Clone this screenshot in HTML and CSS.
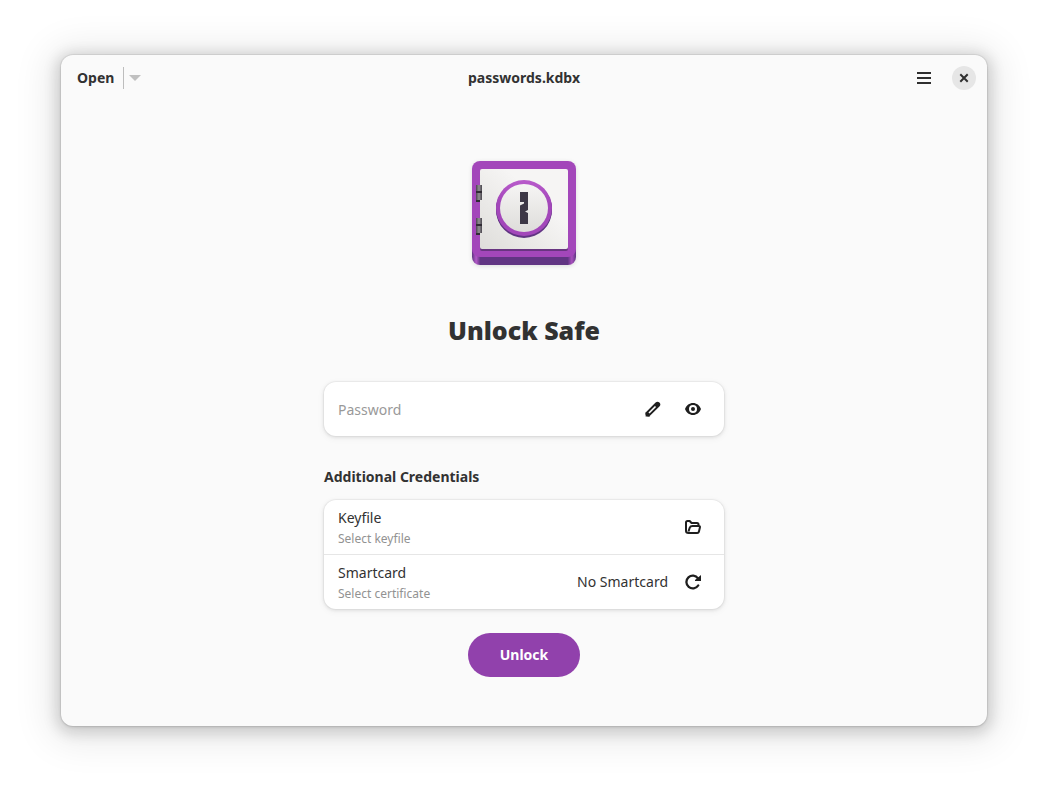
FILE: index.html
```html
<!DOCTYPE html>
<html lang="en">
<head>
<meta charset="utf-8">
<meta name="viewport" content="width=device-width, initial-scale=1">
<title>passwords.kdbx</title>
<link rel="stylesheet" href="styles.css">
</head>
<body>
<div class="window">
  <header class="headerbar">
    <div class="header-start">
      <button class="open-button" type="button">Open</button>
      <button class="recent-button" type="button" aria-label="Recent safes">
        <svg width="12" height="6" viewBox="0 0 12 6"><path d="M0 0h12L6 6z" fill="#c0c0c0"/></svg>
      </button>
    </div>
    <h1 class="window-title">passwords.kdbx</h1>
    <div class="header-end">
      <button class="menu-button" type="button" aria-label="Main menu">
        <svg width="16" height="16" viewBox="0 0 16 16"><path d="M1 2h14v2H1zM1 7h14v2H1zM1 12h14v2H1z" fill="#2f2f2f"/></svg>
      </button>
      <button class="close-button" type="button" aria-label="Close">
        <svg width="16" height="16" viewBox="0 0 16 16"><path d="M5 5l6 6M11 5l-6 6" stroke="#2f2f2f" stroke-width="2" stroke-linecap="square" fill="none"/></svg>
      </button>
    </div>
  </header>
  <main class="content">
    <svg class="safe" viewBox="0 0 128 128" aria-hidden="true">
      <defs>
        <linearGradient id="base" x1="0" x2="1" y1="0" y2="0">
          <stop offset="0" stop-color="#613583"/><stop offset=".04" stop-color="#b35ac8"/><stop offset=".08" stop-color="#613583"/>
          <stop offset=".92" stop-color="#613583"/><stop offset=".96" stop-color="#a850bd"/><stop offset="1" stop-color="#613583"/>
        </linearGradient>
        <linearGradient id="door" x1="0" x2="1" y1="1" y2="0">
          <stop offset="0" stop-color="#deddda"/><stop offset=".65" stop-color="#f6f5f4"/>
        </linearGradient>
        <linearGradient id="dial" x1="0" x2="0" y1="0" y2="1">
          <stop offset="0" stop-color="#f6f5f4"/><stop offset="1" stop-color="#deddda"/>
        </linearGradient>
        <linearGradient id="ring" x1="0" x2="0" y1="0" y2="1">
          <stop offset="0" stop-color="#b95bcb"/><stop offset=".4" stop-color="#a347ba"/>
        </linearGradient>
        <linearGradient id="hinge" x1="0" x2="1" y1="0" y2="0">
          <stop offset="0" stop-color="#4a464e"/><stop offset=".5" stop-color="#939193"/><stop offset="1" stop-color="#4a464e"/>
        </linearGradient>
      </defs>
      <rect x="12" y="20" width="104" height="96" rx="8" fill="url(#base)"/>
      <path d="M20 12h88a8 8 0 0 1 8 8v80a8 8 0 0 1-8 8H20a8 8 0 0 1-8-8V20a8 8 0 0 1 8-8z" fill="#a347ba"/>
      <rect x="20" y="23" width="88" height="79" rx="2" fill="#693581"/>
      <rect x="20" y="20" width="88" height="80" rx="2" fill="url(#door)"/>
      <circle cx="64" cy="61" r="28" fill="#613583"/>
      <circle cx="64" cy="60" r="28" fill="#613583"/>
      <circle cx="64" cy="59" r="28" fill="url(#ring)"/>
      <circle cx="64" cy="59" r="24" fill="url(#dial)"/>
      <path d="M60 43h8v18l-3 1.500 3 1.500v11h-8V56.500l4-2V53h-4z" fill="#3d3846"/>
      <path d="M16 37h6v14h-2v2h-4z" fill="#302c34"/>
      <path d="M16 36h6v6h-6zM16 44h6v7h-6z" fill="url(#hinge)"/>
      <path d="M16 70h6v14h-2v2h-4z" fill="#302c34"/>
      <path d="M16 69h6v6h-6zM16 77h6v7h-6z" fill="url(#hinge)"/>
    </svg>
    <h2 class="headline">Unlock Safe</h2>
    <form class="form">
      <div class="card row">
        <input class="password" type="password" placeholder="Password" aria-label="Password">
        <button class="icon-button" type="button" aria-label="Generate password">
          <svg width="16" height="16" viewBox="0 0 16 16"><path d="M3.300 12.700l9.200-9.200" stroke="#1e1e1e" stroke-width="5.400" stroke-linecap="round"/><path d="M.6 15.400v-4.500l4.500 4.500z" fill="#1e1e1e"/><path d="M4 12l6.500-6.500" stroke="#fff" stroke-width="1.600"/></svg>
        </button>
        <button class="icon-button" type="button" aria-label="Show password">
          <svg width="16" height="16" viewBox="0 0 16 16"><path fill="#1e1e1e" fill-rule="evenodd" d="M8 2C4.500 2 1.300 4.300 0 8c1.300 3.700 4.500 6 8 6s6.700-2.300 8-6c-1.300-3.700-4.500-6-8-6zm0 2a4 4 0 1 1 0 8 4 4 0 0 1 0-8z"/><circle cx="8" cy="8" r="2" fill="#1e1e1e"/></svg>
        </button>
      </div>
      <h3 class="group-title">Additional Credentials</h3>
      <div class="card">
        <div class="row">
          <div class="labels"><span class="label">Keyfile</span><span class="subtitle">Select keyfile</span></div>
          <button class="icon-button" type="button" aria-label="Select keyfile">
            <svg width="16" height="16" viewBox="0 0 16 16"><path d="M3.500 14h8.700c1 0 1.500-.4 1.700-1.200l1-4.300c.2-.9-.2-1.500-1-1.500H7.500C6 7 5.200 7.400 4.800 8.500L3.500 12.500M3.500 14C1.700 14 1 13.500 1 12V3.500C1 2.500 1.500 2 2.500 2h2.200L6.500 4H12c1 0 1.500.5 1.500 1.500V7" fill="none" stroke="#1e1e1e" stroke-width="2" stroke-linejoin="round"/></svg>
          </button>
        </div>
        <div class="row">
          <div class="labels"><span class="label">Smartcard</span><span class="subtitle">Select certificate</span></div>
          <span class="label">No Smartcard</span>
          <button class="icon-button" type="button" aria-label="Refresh smartcards">
            <svg width="16" height="16" viewBox="0 0 16 16"><path d="M13 4.300A6.400 6.400 0 1 0 13.200 11.500" fill="none" stroke="#1e1e1e" stroke-width="2.300" stroke-linecap="round"/><path d="M16 1v6h-6V6z" fill="#1e1e1e"/></svg>
          </button>
        </div>
      </div>
      <button class="unlock" type="button">Unlock</button>
    </form>
  </main>
</div>
</body>
</html>
```
FILE: styles.css
```css
* { box-sizing: border-box; }
body {
  margin: 0;
  min-height: 100vh;
  padding: 55px 61px 67px;
  display: flex;
  background: #fff;
  color: #323232;
  font: 14px/20px "Noto Sans", sans-serif;
}
h1, h2, h3 { margin: 0; }
svg { display: block; }
button {
  border: 0;
  padding: 0;
  background: none;
  color: inherit;
  font: inherit;
  font-weight: 700;
}
.window {
  flex: 1;
  display: flex;
  flex-direction: column;
  background: #fafafa;
  border-radius: 12px;
  box-shadow: 0 0 0 1px rgba(0, 0, 0, .05), 0 1px 3px rgba(0, 0, 0, .12), 0 3px 14px 5px rgba(0, 0, 0, .14), 0 4px 36px 14px rgba(0, 0, 0, .08);
}
.headerbar {
  display: grid;
  grid-template-columns: 1fr auto 1fr;
  align-items: center;
  height: 46px;
  padding: 0 11px;
}
.header-start, .header-end { display: flex; align-items: center; }
.header-start { padding-left: 5px; }
.header-end { justify-content: flex-end; gap: 20px; }
.recent-button {
  height: 22px;
  margin-left: 9px;
  padding-left: 5px;
  border-left: 1px solid #bdbdbd;
}
.window-title { font-size: 14px; line-height: 20px; }
.close-button {
  width: 24px;
  height: 24px;
  border-radius: 50%;
  background: #e6e6e6;
  display: grid;
  place-items: center;
}
.content {
  flex: 1;
  display: flex;
  flex-direction: column;
  align-items: center;
  padding: 48px 24px;
}
.safe {
  width: 128px;
  height: 128px;
  filter: drop-shadow(0 1px 2px rgba(0, 0, 0, .12));
}
.headline {
  margin: 35px 0 34px;
  font-size: 25px;
  line-height: 36px;
  font-weight: 900;
}
.form {
  width: 100%;
  max-width: 400px;
  display: flex;
  flex-direction: column;
}
.card {
  background: #fff;
  border-radius: 12px;
  box-shadow: 0 0 0 1px rgba(0, 0, 0, .03), 0 1px 3px 1px rgba(0, 0, 0, .07), 0 2px 6px 2px rgba(0, 0, 0, .03);
}
.row {
  display: flex;
  align-items: center;
  min-height: 54px;
  padding: 0 14px;
}
.row + .row { border-top: 1px solid #e6e6e6; min-height: 55px; }
.password {
  flex: 1;
  min-width: 0;
  border: 0;
  padding: 2px 0 0;
  outline: 0;
  background: none;
  color: inherit;
  font: inherit;
}
.password::placeholder { color: #999; opacity: 1; }
.icon-button {
  width: 34px;
  height: 34px;
  display: grid;
  place-items: center;
}
.icon-button + .icon-button { margin-left: 6px; }
.label + .icon-button { margin-left: 8px; }
.labels {
  flex: 1;
  display: flex;
  flex-direction: column;
  gap: 1px;
  padding-top: 3px;
}
.subtitle { font-size: 12px; color: #929292; }
.group-title {
  margin: 31px 0 13px;
  font-size: 14px;
  line-height: 20px;
}
.unlock {
  align-self: center;
  height: 44px;
  margin-top: 24px;
  padding: 0 32px;
  border-radius: 22px;
  background: #9141ac;
  color: #fff;
}
```
